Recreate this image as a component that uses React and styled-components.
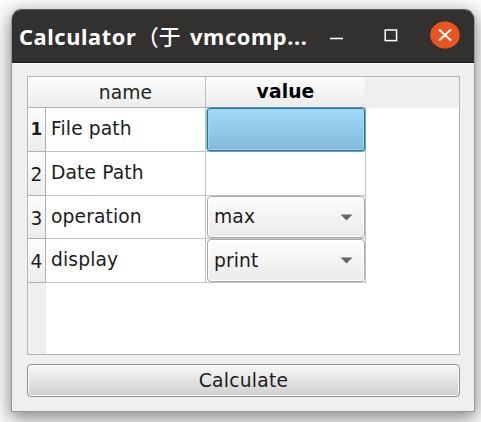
import React from 'react';
import styled, { createGlobalStyle } from 'styled-components';

const Global = createGlobalStyle`
  * { box-sizing: border-box; }
  body { margin: 0; background: #fff; overflow: hidden; }
`;

const Desktop = styled.div`
  width: 481px;
  height: 422px;
  padding: 9px 6px 10px 11px;
  overflow: hidden;
  background: #fcfcfc;
  font: 18.7px/22px "DejaVu Sans", sans-serif;
  letter-spacing: 0.12px;
  color: #1c1c1c;
`;

const Window = styled.main`
  height: 403px;
  display: flex;
  flex-direction: column;
  border: 1px solid #969696;
  border-top-color: #5c5a59;
  border-radius: 10px 10px 0 0;
  background: #efefef;
  box-shadow: 0 5px 18px 1px rgba(0, 0, 0, 0.48);
`;

const TitleBar = styled.header`
  flex: 0 0 53px;
  display: flex;
  align-items: center;
  padding-left: 7px;
  border-radius: 9px 9px 0 0;
  border-bottom: 1px solid #1e1c1c;
  background: #333030;
`;

const Title = styled.h1`
  margin: 1px 0 0;
  width: 300px;
  display: flex;
  font: bold 21.8px/30px "Noto Sans", "Noto Sans CJK SC", sans-serif;
  white-space: pre;
  color: #fff;
`;

const TitlePart = styled.span`
  flex: 0 0 ${(p) => p.$width}px;
  letter-spacing: ${(p) => p.$tracking || 0}px;
  font-weight: ${(p) => p.$weight || 700};
`;

const Controls = styled.svg`
  display: block;
  width: 150px;
  height: 52px;
`;

const Content = styled.section`
  flex: 1;
  display: flex;
  flex-direction: column;
  gap: 9px;
  padding: 12px 14px 14px 15px;
  border-top: 1px solid #fafafa;
`;

const Table = styled.div`
  flex: 0 0 279px;
  display: flex;
  flex-direction: column;
  border: 1px solid #b4b4b4;
  background: #fff;
`;

const HeaderRow = styled.div`
  flex: 0 0 31px;
  display: flex;
  background: #efefef;
`;

const HeaderCell = styled.div`
  width: ${(p) => p.$width}px;
  padding: ${(p) => (p.$selected ? 4 : 5)}px 0 0 ${(p) => p.$inset || 0}px;
  text-align: center;
  font-weight: ${(p) => (p.$selected ? 'bold' : 'normal')};
  color: ${(p) => (p.$selected ? '#000' : '#222')};
  border-right: 1px solid ${(p) => (p.$selected ? '#ececec' : '#bdbdbd')};
  border-bottom: 1px solid #b0b0b0;
  background: linear-gradient(#fdfdfd, #ececec);
`;

const TableBody = styled.div`
  flex: 1;
  background: linear-gradient(90deg, #efefef 18px, #fff 18px);
`;

const Row = styled.div`
  display: flex;
  height: ${(p) => p.$height}px;
`;

const RowNumber = styled.div`
  width: 18px;
  padding-top: ${(p) => (p.$selected ? 10 : 12)}px;
  display: flex;
  justify-content: center;
  letter-spacing: 0;
  font-size: ${(p) => (p.$selected ? 17 : 18.6)}px;
  font-weight: ${(p) => (p.$selected ? 'bold' : 'normal')};
  border-right: 1px solid #b0b0b0;
  border-bottom: 1px solid #b0b0b0;
  background: linear-gradient(#fdfdfd, #ececec);
`;

const NameCell = styled.div`
  width: 160px;
  padding: 10px 0 0 5px;
  white-space: nowrap;
  border-right: 1px solid #c4c4c4;
  border-bottom: 1px solid #c4c4c4;
`;

const ValueCell = styled.div`
  width: 160px;
  display: flex;
  padding-left: 1px;
  border-right: 1px solid #c4c4c4;
  border-bottom: 1px solid #c4c4c4;
`;

const SelectedButton = styled.button`
  flex: 1;
  border: 1px solid #2676a8;
  border-radius: 3px;
  box-shadow: inset 0 0 0 1px #9ed3f1, 0 0 0 0.5px #2676a8;
  background: linear-gradient(#a0dbfa, #83b8db);
`;

const ComboBox = styled.button`
  flex: 1;
  display: flex;
  align-items: center;
  justify-content: space-between;
  padding: 0 11px 0 6px;
  border: 1px solid #a8a8a8;
  border-radius: 4px;
  box-shadow: inset 0 0 0 1px #fff;
  background: linear-gradient(#fdfdfd, #eaeaea);
  font: inherit;
  letter-spacing: inherit;
  color: inherit;
`;

const CalculateButton = styled.button`
  flex: 0 0 33px;
  padding: 1px 0 0;
  border: 1px solid #949494;
  border-radius: 4px;
  box-shadow: inset 0 0 0 1px #f8f8f8;
  background: linear-gradient(#f8f8f8, #d0d0d0);
  font: inherit;
  letter-spacing: 0.25px;
  color: inherit;
`;

const rows = [
  { name: 'File path', height: 44, selected: true },
  { name: 'Date Path', height: 44 },
  { name: 'operation', height: 43, option: 'max' },
  { name: 'display', height: 44, option: 'print' },
];

function Value({ row }) {
  if (row.selected) return <SelectedButton aria-label="File path" />;
  if (!row.option) return null;
  return (
    <ComboBox>
      {row.option}
      <svg width="13" height="7" viewBox="0 0 13 7">
        <path d="M0.5 0.5h12l-6 6z" fill="#666" />
      </svg>
    </ComboBox>
  );
}

export default function App() {
  return (
    <Desktop>
      <Global />
      <Window>
        <TitleBar>
          <Title>
            <TitlePart $width={118} $tracking={0.6}>Calculator</TitlePart>
            <TitlePart $width={53} $weight={500}>（于</TitlePart>
            <TitlePart $width={129} $tracking={0.6}>vmcomp...</TitlePart>
          </Title>
          <Controls viewBox="0 0 150 52" fill="none" stroke="#fff">
            <path d="M11 28.5H24" strokeWidth="1.6" />
            <rect x="66.2" y="20" width="11.4" height="10.6" strokeWidth="1.5" />
            <ellipse cx="126" cy="25" rx="14.8" ry="13.6" fill="#e95420" stroke="none" />
            <path d="M120 19.5l12 11M132 19.5l-12 11" strokeWidth="2" />
          </Controls>
        </TitleBar>
        <Content>
          <Table>
            <HeaderRow>
              <HeaderCell $width={178} $inset={18}>name</HeaderCell>
              <HeaderCell $width={160} $selected>value</HeaderCell>
            </HeaderRow>
            <TableBody>
              {rows.map((row, i) => (
                <Row key={row.name} $height={row.height}>
                  <RowNumber $selected={row.selected}>{i + 1}</RowNumber>
                  <NameCell>{row.name}</NameCell>
                  <ValueCell><Value row={row} /></ValueCell>
                </Row>
              ))}
            </TableBody>
          </Table>
          <CalculateButton>Calculate</CalculateButton>
        </Content>
      </Window>
    </Desktop>
  );
}
